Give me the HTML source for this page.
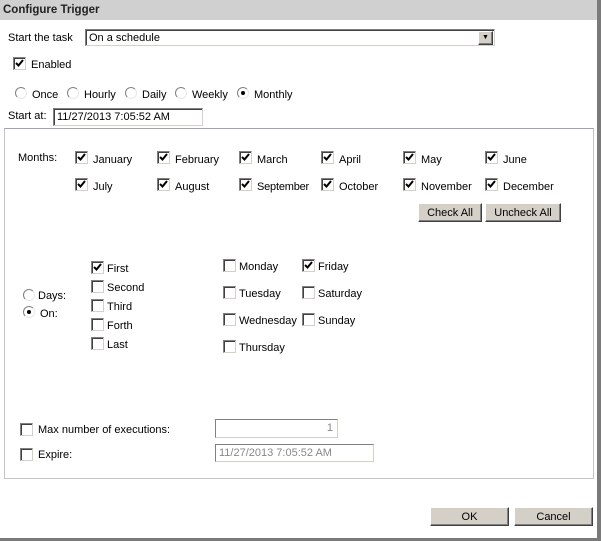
<!DOCTYPE html>
<html><head><meta charset="utf-8"><style>
*{margin:0;padding:0;box-sizing:border-box}
body{width:601px;height:541px;background:#fff;position:relative;overflow:hidden;font-family:"Liberation Sans","DejaVu Sans",sans-serif;font-size:11px;color:#000}
.a{position:absolute;white-space:nowrap;line-height:17px}
.cb{position:absolute;width:13px;height:13px;background:#fff;border:1px solid;border-color:#808080 #d4d0c8 #d4d0c8 #808080;box-shadow:inset 1px 1px 0 #404040}
.cb svg{position:absolute;left:1px;top:1px}
.cb path{fill:none;stroke:#000;stroke-width:2}
.rd{position:absolute;width:12px;height:12px;border-radius:50%;background:#fff;border:1px solid;border-color:#808080 #e8e8e8 #e8e8e8 #808080}
.rd.on::after{content:"";position:absolute;left:3px;top:3px;width:4px;height:4px;border-radius:50%;background:#000}
.btn{position:absolute;background:#d4d0c8;border:1px solid;border-color:#fff #404040 #404040 #fff;box-shadow:inset -1px -1px 0 #808080;text-align:center;line-height:18px}
.in{position:absolute;border:1px solid;border-color:#808080 #d4d0c8 #d4d0c8 #808080;box-shadow:inset 1px 1px 0 #404040;background:#fff;padding-left:3px;line-height:16px}
</style></head><body>
<div class="a" style="left:0;top:0;width:597px;height:20px;background:#d0d0d0"></div>
<div class="a" style="left:3px;top:2px;font-weight:bold;font-size:11.5px;color:#222">Configure Trigger</div>
<div class="a" style="left:597px;top:0;width:4px;height:541px;background:#7a7a7a"></div>
<div class="a" style="left:0;top:538px;width:601px;height:3px;background:#7a7a7a"></div>

<div class="a" style="left:8px;top:30px">Start the task</div>
<div class="in" style="left:85px;top:29px;width:410px;height:17px;padding-left:3px">On a schedule</div>
<div class="btn" style="left:478px;top:31px;width:15px;height:14px;font-size:7px;line-height:12px">&#9660;</div>

<div class="cb" style="left:13px;top:57px"><svg width="9" height="9"><path d="M1 4l2.5 2.5L8 1"/></svg></div>
<div class="a" style="left:31px;top:57px">Enabled</div>

<div class="rd" style="left:15px;top:87px"></div><div class="a" style="left:32px;top:87px">Once</div>
<div class="rd" style="left:67px;top:87px"></div><div class="a" style="left:84px;top:87px">Hourly</div>
<div class="rd" style="left:125px;top:87px"></div><div class="a" style="left:142px;top:87px">Daily</div>
<div class="rd" style="left:175px;top:87px"></div><div class="a" style="left:192px;top:87px">Weekly</div>
<div class="rd on" style="left:237px;top:87px"></div><div class="a" style="left:254px;top:87px">Monthly</div>

<div class="a" style="left:8px;top:108px">Start at:</div>
<div class="in" style="left:53px;top:108px;width:150px;height:18px">11/27/2013 7:05:52 AM</div>

<div class="a" style="left:4px;top:128px;width:590px;height:351px;border:1px solid #c4c4c4;border-top-color:#a0a0b0"></div>

<div class="a" style="left:18px;top:150px">Months:</div>
<div class="cb" style="left:75px;top:151px"><svg width="9" height="9"><path d="M1 4l2.5 2.5L8 1"/></svg></div><div class="a" style="left:93px;top:152px">January</div>
<div class="cb" style="left:157px;top:151px"><svg width="9" height="9"><path d="M1 4l2.5 2.5L8 1"/></svg></div><div class="a" style="left:175px;top:152px">February</div>
<div class="cb" style="left:239px;top:151px"><svg width="9" height="9"><path d="M1 4l2.5 2.5L8 1"/></svg></div><div class="a" style="left:257px;top:152px">March</div>
<div class="cb" style="left:321px;top:151px"><svg width="9" height="9"><path d="M1 4l2.5 2.5L8 1"/></svg></div><div class="a" style="left:339px;top:152px">April</div>
<div class="cb" style="left:403px;top:151px"><svg width="9" height="9"><path d="M1 4l2.5 2.5L8 1"/></svg></div><div class="a" style="left:421px;top:152px">May</div>
<div class="cb" style="left:485px;top:151px"><svg width="9" height="9"><path d="M1 4l2.5 2.5L8 1"/></svg></div><div class="a" style="left:503px;top:152px">June</div>
<div class="cb" style="left:75px;top:178px"><svg width="9" height="9"><path d="M1 4l2.5 2.5L8 1"/></svg></div><div class="a" style="left:93px;top:179px">July</div>
<div class="cb" style="left:157px;top:178px"><svg width="9" height="9"><path d="M1 4l2.5 2.5L8 1"/></svg></div><div class="a" style="left:175px;top:179px">August</div>
<div class="cb" style="left:239px;top:178px"><svg width="9" height="9"><path d="M1 4l2.5 2.5L8 1"/></svg></div><div class="a" style="left:257px;top:179px;letter-spacing:-0.2px">September</div>
<div class="cb" style="left:321px;top:178px"><svg width="9" height="9"><path d="M1 4l2.5 2.5L8 1"/></svg></div><div class="a" style="left:339px;top:179px">October</div>
<div class="cb" style="left:403px;top:178px"><svg width="9" height="9"><path d="M1 4l2.5 2.5L8 1"/></svg></div><div class="a" style="left:421px;top:179px">November</div>
<div class="cb" style="left:485px;top:178px"><svg width="9" height="9"><path d="M1 4l2.5 2.5L8 1"/></svg></div><div class="a" style="left:503px;top:179px">December</div>

<div class="btn" style="left:418px;top:203px;width:64px;height:19px">Check All</div>
<div class="btn" style="left:485px;top:203px;width:76px;height:19px">Uncheck All</div>

<div class="rd" style="left:23px;top:289px"></div><div class="a" style="left:38px;top:288px">Days:</div>
<div class="rd on" style="left:23px;top:306px"></div><div class="a" style="left:40px;top:306px">On:</div>

<div class="cb" style="left:91px;top:261px"><svg width="9" height="9"><path d="M1 4l2.5 2.5L8 1"/></svg></div><div class="a" style="left:107px;top:261px">First</div>
<div class="cb" style="left:91px;top:280px"></div><div class="a" style="left:107px;top:280px">Second</div>
<div class="cb" style="left:91px;top:299px"></div><div class="a" style="left:107px;top:299px">Third</div>
<div class="cb" style="left:91px;top:318px"></div><div class="a" style="left:107px;top:318px">Forth</div>
<div class="cb" style="left:91px;top:337px"></div><div class="a" style="left:107px;top:337px">Last</div>

<div class="cb" style="left:223px;top:259px"></div><div class="a" style="left:239px;top:259px">Monday</div>
<div class="cb" style="left:223px;top:286px"></div><div class="a" style="left:239px;top:286px">Tuesday</div>
<div class="cb" style="left:223px;top:313px"></div><div class="a" style="left:239px;top:313px">Wednesday</div>
<div class="cb" style="left:223px;top:340px"></div><div class="a" style="left:239px;top:340px">Thursday</div>
<div class="cb" style="left:302px;top:259px"><svg width="9" height="9"><path d="M1 4l2.5 2.5L8 1"/></svg></div><div class="a" style="left:318px;top:259px">Friday</div>
<div class="cb" style="left:302px;top:286px"></div><div class="a" style="left:318px;top:286px">Saturday</div>
<div class="cb" style="left:302px;top:313px"></div><div class="a" style="left:318px;top:313px">Sunday</div>

<div class="cb" style="left:20px;top:423px"></div><div class="a" style="left:38px;top:422px">Max number of executions:</div>
<div class="in" style="left:215px;top:419px;width:123px;height:19px;text-align:right;padding-right:4px;color:#888;box-shadow:none;line-height:17px">1</div>
<div class="cb" style="left:20px;top:448px"></div><div class="a" style="left:38px;top:447px">Expire:</div>
<div class="in" style="left:215px;top:444px;width:159px;height:18px;color:#888;box-shadow:none">11/27/2013 7:05:52 AM</div>

<div class="btn" style="left:430px;top:507px;width:79px;height:19px">OK</div>
<div class="btn" style="left:514px;top:507px;width:79px;height:19px">Cancel</div>
</body></html>
